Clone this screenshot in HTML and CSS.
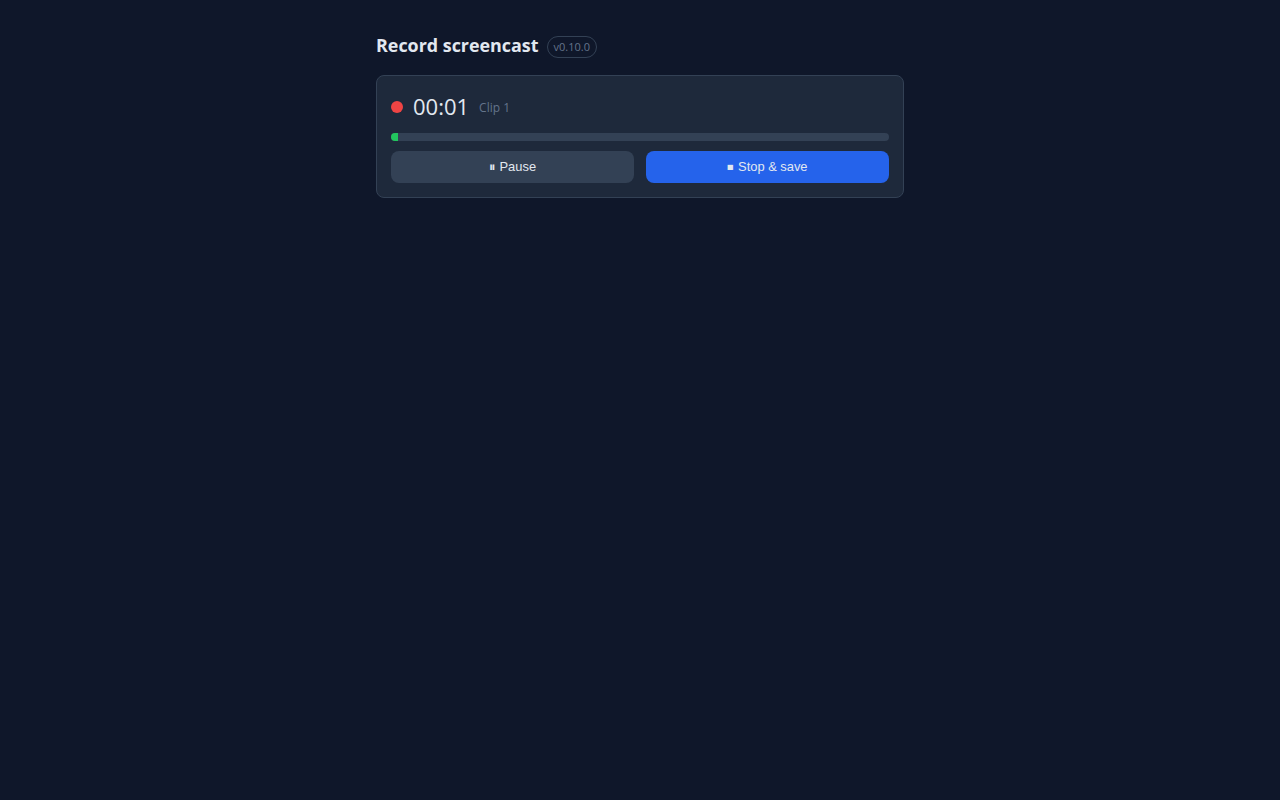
FILE: index.html
```html
<!DOCTYPE html>
<html lang="en">
<head>
  <meta name="viewport" content="width=device-width, initial-scale=1">
  <title>Record screencast</title>
  <link rel="stylesheet" href="styles.css">
</head>
<body>
  <div class="container">
    <div class="header">
      <h1 class="title">Record screencast</h1>
      <span class="version">v0.10.0</span>
    </div>

    <div class="card">
      <div class="status">
        <span class="rec-dot"></span>
        <span class="timer">00:01</span>
        <span class="clip">Clip 1</span>
      </div>

      <div class="progress">
        <div class="progress-fill" style="width: 1.4%"></div>
      </div>

      <div class="actions">
        <button class="btn btn-secondary">⏸ Pause</button>
        <button class="btn btn-primary">⏹ Stop &amp; save</button>
      </div>
    </div>
  </div>
</body>
</html>
```

FILE: styles.css
```css
:root {
  --bg: #0f172a;
  --card-bg: #1e293b;
  --border: #334155;
  --text: #e2e8f0;
  --muted: #64748b;
  --red: #ef4444;
  --green: #22c55e;
  --blue: #2563eb;
}

* {
  box-sizing: border-box;
}

body {
  margin: 0;
  min-height: 100vh;
  background-color: var(--bg);
  color: var(--text);
  font-family: "Open Sans", sans-serif;
}

.container {
  width: 528px;
  margin: 0 auto;
  padding-top: 33px;
}

.header {
  display: flex;
  align-items: center;
  gap: 8px;
  height: 24px;
  margin-bottom: 18px;
}

.title {
  margin: 0;
  font-size: 17.9px;
  font-weight: 700;
}

.version {
  margin-top: 4px;
  padding: 2px 6px 3px;
  border: 1px solid var(--border);
  border-radius: 999px;
  color: var(--muted);
  font-size: 11px;
}

.card {
  padding: 15px 14px 14px;
  background-color: var(--card-bg);
  border: 1px solid var(--border);
  border-radius: 8px;
}

.status {
  display: flex;
  align-items: center;
  margin-bottom: 10px;
}

.rec-dot {
  width: 12px;
  height: 12px;
  margin-right: 10px;
  border-radius: 50%;
  background-color: var(--red);
}

.timer {
  margin-right: 10px;
  margin-bottom: 2px;
  font-size: 22px;
  color: var(--text);
}

.clip {
  color: var(--muted);
  font-size: 12px;
}

.progress {
  height: 8px;
  margin-bottom: 10px;
  background-color: var(--border);
  border-radius: 4px;
  overflow: hidden;
}

.progress-fill {
  height: 100%;
  background-color: var(--green);
}

.actions {
  display: flex;
  gap: 12px;
}

.btn {
  flex: 1;
  height: 32px;
  border: none;
  border-radius: 8px;
  color: var(--text);
  font-family: "Liberation Sans", sans-serif;
  font-size: 12.9px;
}

.btn-secondary {
  background-color: var(--border);
}

.btn-primary {
  background-color: var(--blue);
}
```
